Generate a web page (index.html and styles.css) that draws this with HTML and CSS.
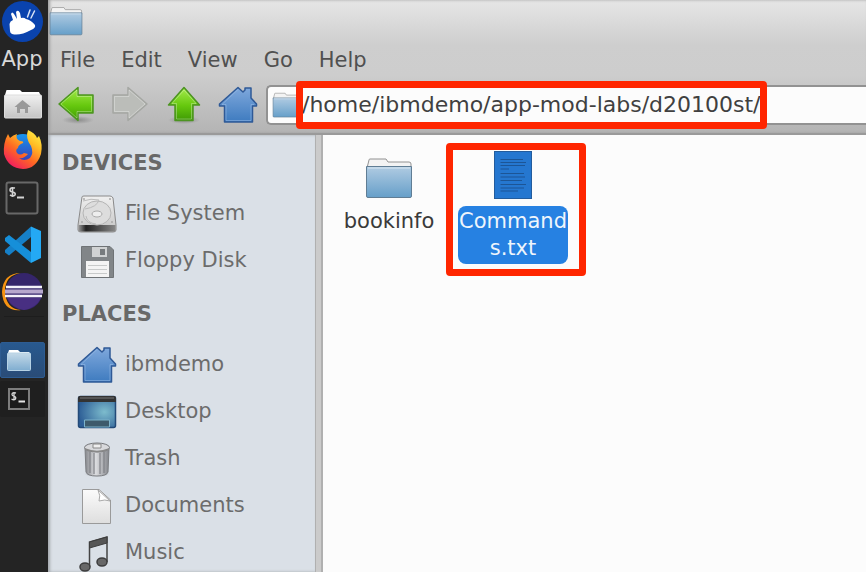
FILE: index.html
```
<!DOCTYPE html>
<html lang="en">
<head>
<meta charset="utf-8">
<title>File Manager</title>
<link rel="stylesheet" href="styles.css">
</head>
<body>
<svg class="defs" aria-hidden="true">
  <defs>
    <linearGradient id="blue" x1="0" y1="0" x2="0" y2="1"><stop offset="0" stop-color="#b0cbe2"/><stop offset="1" stop-color="#669fc9"/></linearGradient>
    <linearGradient id="pale" x1="0" y1="0" x2="0" y2="1"><stop offset="0" stop-color="#c4d9e8"/><stop offset="1" stop-color="#7fadd0"/></linearGradient>
    <linearGradient id="house" x1="0" y1="0" x2="0" y2="1"><stop offset="0" stop-color="#7fa8dc"/><stop offset="1" stop-color="#3e7bbf"/></linearGradient>
    <linearGradient id="green" x1="0" y1="0" x2="0" y2="1"><stop offset="0" stop-color="#a5ec4c"/><stop offset="0.55" stop-color="#66c80e"/><stop offset="1" stop-color="#3f9a04"/></linearGradient>
    <linearGradient id="grey" x1="0" y1="0" x2="0" y2="1"><stop offset="0" stop-color="#f0f0f0"/><stop offset="1" stop-color="#c4c4c4"/></linearGradient>
    <linearGradient id="paper" x1="0" y1="0" x2="0" y2="1"><stop offset="0" stop-color="#fbfbfb"/><stop offset="1" stop-color="#dedede"/></linearGradient>
    <linearGradient id="can" x1="0" y1="0" x2="1" y2="0"><stop offset="0" stop-color="#85878c"/><stop offset="0.45" stop-color="#dcdde0"/><stop offset="1" stop-color="#84868b"/></linearGradient>
    <linearGradient id="rim" x1="0" y1="0" x2="1" y2="0"><stop offset="0" stop-color="#999"/><stop offset="0.2" stop-color="#222"/><stop offset="1" stop-color="#888"/></linearGradient>
    <radialGradient id="screen" cx="0.7" cy="0.5" r="0.7"><stop offset="0" stop-color="#7dbccd"/><stop offset="1" stop-color="#2d5e96"/></radialGradient>
    <linearGradient id="fox" x1="0.9" y1="0" x2="0.2" y2="1"><stop offset="0" stop-color="#fff44a"/><stop offset="0.3" stop-color="#ffbd25"/><stop offset="0.6" stop-color="#ff6a22"/><stop offset="1" stop-color="#ee1466"/></linearGradient>
    <linearGradient id="globe" x1="0" y1="0" x2="0" y2="1"><stop offset="0" stop-color="#1596ef"/><stop offset="1" stop-color="#3d35b2"/></linearGradient>
    <radialGradient id="ground"><stop offset="0" stop-color="#000" stop-opacity="0.25"/><stop offset="1" stop-color="#000" stop-opacity="0"/></radialGradient>
  </defs>
  <symbol id="folder" viewBox="0 0 48 42">
    <path d="M2 11 L4 3 Q4 2 5 2 H21 L23 5 H44 Q46 5 46 7 V12Z" fill="#f3f3f3" stroke="#929292"/>
    <path d="M1.500 9.500H46.500V39Q46.500 40.500 45 40.500H3Q1.500 40.500 1.500 39Z" fill="url(#blue)" stroke="#607d94"/>
    <path d="M3 11H45" stroke="#d9e7f1"/>
  </symbol>
  <symbol id="home" viewBox="0 0 40 38">
    <path d="M20 1.500 25 6 27 4V2H33V12L38.500 18V20H34.500V36H6.500V20H1.500V18Z" fill="url(#house)" stroke="#2f5996" stroke-width="1.500" stroke-linejoin="round"/>
    <path d="M20 3.500 4 18.500H8V34.500H33V18.500H36" fill="none" stroke="#a0c0e8" stroke-opacity="0.5"/>
  </symbol>
  <symbol id="arrow" viewBox="0 0 38 38">
    <path d="M2 18 21 1.500V9H36V27H21V34.500Z" stroke-width="1.500" stroke-linejoin="round"/>
    <path d="M4 18 20 4V10.500H34.500V25.500H20V32Z" fill="none" stroke="#fff" stroke-opacity="0.3"/>
  </symbol>
</svg>

<div class="desktop">
  <nav class="dock" aria-label="Launcher">
    <button class="launcher menu-button">
      <svg class="logo" viewBox="0 0 44 44"><circle cx="22.500" cy="21.500" r="20.500" fill="#0a43ae"/><path d="M10 31 9.500 24Q10 21 13 20L11 14Q12 11 14 14L17 19L16 12Q18 9 20 13L21 18Q24 17 26 19Q31 20 35 25Q36 28 31 30Q20 36 12 34Q10 33 10 31Z" fill="#fff"/><path d="M27.500 17 30 10M31 18 34.500 11" stroke="#d7e2f5" stroke-width="1.500" stroke-linecap="round"/></svg>
      <span class="menu-label">App</span>
    </button>
    <button class="launcher" aria-label="Home folder">
      <svg class="launch-icon" viewBox="0 0 44 46"><path d="M5 14 6.500 9H20L22 11H39L41 15Z" fill="#fff"/><rect x="4.500" y="14" width="37" height="23" rx="1" fill="url(#grey)" stroke="#ddd"/><path d="M22.500 19 31 26H28V32H25V28H20V32H17V26H14.500Z" fill="#999"/></svg>
    </button>
    <button class="launcher" aria-label="Firefox">
      <svg class="launch-icon" viewBox="0 0 44 46"><circle cx="23" cy="21" r="15" fill="url(#globe)"/><path d="M28 2Q35 5 37 10L39 8Q43 16 41 26Q36 41 23 41Q8 40 4 26Q3 15 8 6L10 10Q13 7 17 6Q15 11 20 13Q24 13 23 15Q18 17 18 20Q15 22 17 25Q20 28 24 25L28 26Q24 31 19 30Q24 34 30 30Q34 25 31 18Q25 10 28 2Z" fill="url(#fox)"/></svg>
    </button>
    <button class="launcher" aria-label="Terminal">
      <svg class="terminal-large" viewBox="0 0 34 34"><rect x="1.500" y="1.500" width="31" height="31" rx="2" fill="#252525" stroke="#686868" stroke-width="2"/><path d="M10 7Q5 6 5 9Q5 11 8 11Q11 12 10 14Q8 16 5 14M7.500 6V16" fill="none" stroke="#d4d4d4" stroke-width="1.600"/><path d="M12 16.500H19" stroke="#d4d4d4" stroke-width="2"/></svg>
    </button>
    <button class="launcher" aria-label="Visual Studio Code">
      <svg class="launch-icon" viewBox="0 0 44 46"><path d="M31 4.500V15L9 33.500 5 30.500V28Z" fill="#1680c8"/><path d="M31 41V30L9 13 5 16V19Z" fill="#168fd9"/><path d="M31 4.500 41 9V36L31 41Z" fill="#24a9f4"/></svg>
    </button>
    <button class="launcher" aria-label="Eclipse">
      <svg class="launch-icon" viewBox="0 0 44 46"><path d="M21 4Q5 6 5 22.500Q6 40 21 41Q3 43 2 23Q3 4 21 4Z" fill="#f79312"/><circle cx="24" cy="22.500" r="18.500" fill="#35256b"/><path d="M7 29H41Q36 39 24 41Q12 39 7 29Z" fill="#482f82"/><path d="M6 18H42M5 27H42" stroke="#f4f1fa" stroke-width="2.500"/><path d="M5 22.500H43" stroke="#b6a7cc" stroke-width="4"/></svg>
    </button>
    <div class="dock-rule"></div>
    <button class="task active" aria-label="File manager window">
      <svg class="task-folder" viewBox="0 0 24 22"><path d="M1 4 2 1H11L13 3H22L23 5Z" fill="#fff"/><rect x="0.500" y="4" width="23" height="17.500" rx="1" fill="url(#pale)" stroke="#b6d2e5"/></svg>
    </button>
    <button class="task" aria-label="Terminal window">
      <svg class="terminal-small" viewBox="0 0 24 24"><rect x="2" y="2" width="20" height="20" fill="#1b1b1b" stroke="#7d7d7d" stroke-width="2"/><path d="M9 6Q5 5 5 7.500Q5 9 7 9Q9.500 10 8.500 12Q7 13.500 4.500 12M7 5V13.500" fill="none" stroke="#d8d8d8" stroke-width="1.300"/><path d="M11.500 14.500H18" stroke="#e4e4e4" stroke-width="2"/></svg>
    </button>
  </nav>

  <div class="window">
    <header class="chrome">
      <div class="titlebar"><svg class="title-icon"><use href="#folder"/></svg></div>
      <div class="menubar">
        <button>File</button><button>Edit</button><button>View</button><button>Go</button><button>Help</button>
      </div>
      <div class="toolbar">
        <button class="tool" aria-label="Back"><svg class="tool-icon" viewBox="0 0 38 38"><ellipse cx="21" cy="34" rx="16" ry="4" fill="url(#ground)"/><use href="#arrow" class="arrow-green"/></svg></button>
        <button class="tool" aria-label="Forward" disabled><svg class="tool-icon" viewBox="0 0 38 38"><use href="#arrow" class="arrow-grey" transform="matrix(-1 0 0 1 38 0)"/></svg></button>
        <button class="tool" aria-label="Up"><svg class="tool-icon" viewBox="0 0 38 38"><ellipse cx="19" cy="34" rx="16" ry="4" fill="url(#ground)"/><path d="M19 1.500 34.500 19H28V34.500H10V19H3.500Z" fill="url(#green)" stroke="#4c9421" stroke-width="1.500" stroke-linejoin="round"/><path d="M19 4 31 17.500H26.500V33H11.500V17.500H7Z" fill="none" stroke="#fff" stroke-opacity="0.3"/></svg></button>
        <button class="tool" aria-label="Home"><svg class="home-icon"><use href="#home"/></svg></button>
        <div class="address">
          <svg class="address-icon"><use href="#folder"/></svg>
          <input type="text" aria-label="Location" value="/home/ibmdemo/app-mod-labs/d20100st/">
          <div class="mark mark-path"></div>
        </div>
      </div>
    </header>

    <div class="content">
      <aside class="sidebar">
        <h2>DEVICES</h2>
        <ul>
          <li><a href="#"><svg class="place-icon" viewBox="0 0 40 40"><path d="M5 3Q5 2 7 2H33Q35 2 36 4L39 31V36Q39 38 36 38H4Q1 38 1 36V31Z" fill="url(#grey)" stroke="#8a8a8a"/><path d="M1.500 31H38.500V36Q38 37.500 36 37.500H4Q2 37.500 1.500 36Z" fill="url(#rim)"/><ellipse cx="20" cy="19" rx="14" ry="12" fill="#ddd" stroke="#b5b5b5"/><ellipse cx="20" cy="20" rx="5" ry="3" fill="#eee" stroke="#aaa"/><path d="M6 7Q14 4 22 6Q20 13 8 15M9 22Q10 29 19 30" fill="none" stroke="#bbb"/><circle cx="7" cy="5" r="1" fill="#aaa"/><circle cx="33" cy="5" r="1" fill="#aaa"/><circle cx="5" cy="28" r="1" fill="#aaa"/><circle cx="35" cy="28" r="1" fill="#aaa"/></svg>File System</a></li>
          <li><a href="#"><svg class="place-icon" viewBox="0 0 40 40"><path d="M4.500 5.500H33L36.500 9V36.500H4.500Z" fill="#818588" stroke="#6f7376"/><path d="M15 6H30V16H15Z" fill="#d0d2d3"/><path d="M23 8H28V14H23Z" fill="#777b7e"/><path d="M9 20H32V36H9Z" fill="#f4f4f4"/><path d="M11 24.500H30M11 28.500H30M11 32.500H30" stroke="#c8caca"/></svg>Floppy Disk</a></li>
        </ul>
        <h2>PLACES</h2>
        <ul>
          <li><a href="#"><svg class="place-icon"><use href="#home"/></svg>ibmdemo</a></li>
          <li><a href="#"><svg class="place-icon" viewBox="0 0 40 40"><rect x="1.500" y="4.500" width="37" height="31" rx="2" fill="url(#screen)" stroke="#234a78" stroke-width="1.500"/><path d="M1 10V6Q1 4 3 4H37Q39 4 39 6V10Z" fill="#333"/><path d="M3 6H37" stroke="#777"/><path d="M7.500 35V28H32.500V35Z" fill="#3d5a6b" stroke="#7db3ca"/></svg>Desktop</a></li>
          <li><a href="#"><svg class="place-icon" viewBox="0 0 40 40"><ellipse cx="20" cy="35" rx="13" ry="3" fill="url(#ground)"/><path d="M8 9H32L31 33Q30 37 20 37Q10 37 9 33Z" fill="url(#can)" stroke="#7c7e82"/><path d="M13 13V34M17 14V35M23 14V35M27 13V34" stroke="#777a80" stroke-opacity="0.7" stroke-width="1.500"/><ellipse cx="20" cy="8.500" rx="12.500" ry="4.500" fill="#d8d9dc" stroke="#76787c"/><path d="M16 9V5H24V9Z" fill="#eee" stroke="#888"/><path d="M8 10Q20 15 32 10" fill="none" stroke="#888" stroke-width="1.500"/></svg>Trash</a></li>
          <li><a href="#"><svg class="place-icon" viewBox="0 0 40 40"><path d="M5.500 3.500H22L33.500 14V37.500H5.500Z" fill="url(#paper)" stroke="#9a9a9a"/><path d="M21 4Q24 10 22 15Q28 13 33 15Z" fill="#fff" stroke="#aaa"/></svg>Documents</a></li>
          <li><a href="#"><svg class="place-icon" viewBox="0 0 40 40"><path d="M12.500 34V9L30 4V29" fill="none" stroke="#444" stroke-width="1.500"/><path d="M12.500 9 30 4V10L12.500 15Z" fill="#565656" stroke="#3d3d3d"/><ellipse cx="8" cy="34" rx="5" ry="4" fill="#686868" stroke="#3d3d3d" stroke-width="1.500"/><ellipse cx="25" cy="29" rx="5" ry="4" fill="#686868" stroke="#3d3d3d" stroke-width="1.500"/></svg>Music</a></li>
        </ul>
      </aside>
      <div class="splitter"></div>
      <main class="files">
        <a class="file" href="#">
          <svg class="file-icon"><use href="#folder"/></svg>
          <span class="file-name">bookinfo</span>
        </a>
        <a class="file selected" href="#">
          <svg class="file-icon text-icon" viewBox="0 0 38 48"><rect x="0.500" y="0.500" width="37" height="47" fill="#2577d0" stroke="#235c9d"/><path d="M6.500 8.500H29M6.500 11.500H32M6.500 14.500H31M6.500 18H15M6.500 22.500H30M6.500 26H31M6.500 29.500H28M6.500 33.500H32M6.500 37H30M6.500 40H24" stroke="#1c5596"/></svg>
          <span class="file-name">Commands.txt</span>
          <div class="mark mark-file"></div>
        </a>
      </main>
    </div>
  </div>
</div>
</body>
</html>
```

FILE: styles.css
```
* { box-sizing: border-box; }

body {
  margin: 0;
  overflow: hidden;
  font: 21px/27px "DejaVu Sans", sans-serif;
  color: #505050;
}

button {
  display: flex;
  align-items: center;
  justify-content: center;
  padding: 0;
  border: 0;
  background: none;
  font: inherit;
  color: inherit;
}

a { color: inherit; text-decoration: none; }
svg { display: block; flex: none; }
.defs { position: absolute; width: 0; height: 0; }

.desktop { display: flex; height: 100vh; }

/* Launcher dock */
.dock {
  flex: none;
  width: 48px;
  background: #242424;
  color: #d8d8d8;
}
.launcher { width: 44px; height: 47px; }
.menu-button { flex-direction: column; height: 74px; margin-bottom: 6px; }
.menu-label { line-height: 30px; }
.logo { width: 44px; height: 44px; }
.launch-icon { width: 44px; height: 46px; }
.terminal-large { width: 34px; height: 34px; }
.dock-rule { height: 26px; margin: 1px 4px 0; border-top: 1px solid #1d1d1d; }
.task {
  width: 45px;
  height: 36px;
  padding-right: 7px;
  margin-bottom: 3px;
  border-radius: 2px;
  background: #1f1f1f;
}
.task.active {
  border: 1px solid #2e5c92;
  background: linear-gradient(#28598f, #2a4c77);
}
.task-folder { width: 24px; height: 22px; }
.terminal-small { width: 24px; height: 24px; }

/* Window frame */
.window {
  flex: 1;
  min-width: 0;
  display: flex;
  flex-direction: column;
}
.chrome {
  border-bottom: 2px solid #9a9a9a;
  background: linear-gradient(#e6e6e6, #cecece 45px, #cdcdcd 75px, #b4b4b4);
  box-shadow: inset 2px 0 3px #a0a0a0;
}
.titlebar { height: 44px; padding: 6px 0 0 1px; }
.title-icon { width: 34px; height: 30px; }
.menubar { display: flex; gap: 26px; height: 32px; padding-left: 12px; }
.toolbar { display: flex; align-items: center; height: 57px; padding-left: 1px; }
.tool { flex: none; width: 54px; height: 40px; }
.tool-icon { width: 38px; height: 38px; }
.home-icon { width: 40px; height: 38px; }
.arrow-green { fill: url(#green); stroke: #4c9421; }
.arrow-grey { fill: #bbbdb9; stroke: #a5a7a3; }

.address {
  position: relative;
  flex: 1;
  min-width: 0;
  display: flex;
  align-items: center;
  height: 40px;
  margin-left: 1px;
  padding-left: 4px;
  border: 2px solid #929292;
  border-right: 0;
  border-radius: 5px 0 0 5px;
  background: #fcfcfc;
}
.address-icon { width: 30px; height: 26px; }
.address input {
  flex: 1;
  min-width: 0;
  padding: 0;
  border: 0;
  outline: 0;
  background: none;
  font: inherit;
  font-size: 22px;
  color: #404040;
}

/* Red callouts laid over the window */
.mark {
  position: absolute;
  border: 7px solid #ff2600;
  border-radius: 4px;
  pointer-events: none;
}
.mark-path { top: -6px; left: 28px; width: 471px; height: 48px; }
.mark-file { top: 0; left: -5px; width: 140px; height: 133px; }

/* Sidebar */
.content { flex: 1; min-height: 0; display: flex; }
.sidebar {
  flex: none;
  width: 267px;
  padding: 1px 0 0 14px;
  overflow: hidden;
  background: #dae0e7;
  box-shadow: inset 2px 0 3px #a5a9ae;
  color: #6c6c6c;
}
.sidebar h2 {
  margin: 0;
  font-size: 21px;
  line-height: 54px;
  color: #686868;
}
.sidebar ul { margin: 0 0 3px; padding: 0; list-style: none; }
.sidebar a {
  display: flex;
  align-items: center;
  gap: 8px;
  height: 47px;
  padding-left: 15px;
}
.place-icon { width: 40px; height: 40px; }
.splitter {
  flex: none;
  width: 8px;
  border: 1px solid #b0b0b0;
  border-width: 0 2px 0 1px;
  background: #cbcbcb;
}

/* Icon view */
.files {
  flex: 1;
  min-width: 0;
  display: flex;
  align-items: flex-start;
  padding: 8px 4px;
  background: #fcfcfc;
}
.file {
  position: relative;
  display: flex;
  flex-direction: column;
  align-items: center;
  width: 124px;
  padding-top: 8px;
  color: #3a3a3a;
}
.file-icon { width: 48px; height: 48px; margin-bottom: 7px; }
.file:not(.selected) .file-icon { height: 42px; margin-top: 6px; }
.file-name {
  max-width: 110px;
  padding-top: 2px;
  border-radius: 8px;
  text-align: center;
  overflow-wrap: anywhere;
}
.selected .file-name {
  padding-bottom: 2px;
  background: #2681e2;
  color: #eef5fc;
}
.text-icon { width: 38px; }
```
